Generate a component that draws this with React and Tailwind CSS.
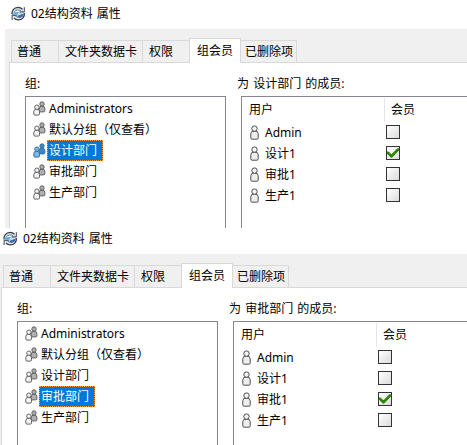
import React from "react";

const ROWS = ["Administrators", "默认分组（仅查看）", "设计部门", "审批部门", "生产部门"];
const USERS = ["Admin", "设计1", "审批1", "生产1"];

function SyncIcon() {
  return (
    <svg width="15" height="15" viewBox="0 0 15 15" className="shrink-0">
      <circle cx="7.2" cy="7.6" r="5.9" fill="#cfdae4" />
      <path d="M2.4 5.6 C4 3.2 8 2.6 10.8 4.6 L7.4 6.2 Z" fill="#f4f7f9" />
      <path d="M1.8 8.6 L2.4 6.4 L8.2 6 L6.4 8.4 Z" fill="#5eaee8" />
      <path d="M6.2 10 L12.8 7.4 L11.6 10.6 L8 12.2 Z" fill="#2c69bd" />
      <path d="M3.2 12 L4.8 10.2 L9.4 11.8 L7 13 Z" fill="#f0f4f7" />
      <path d="M1.1 8.4 C.4 5 3 1.3 7 1.3 C8.9 1.3 10.4 2 11.6 3.2" fill="none" stroke="#35424f" strokeWidth="1.3" />
      <path d="M13.4 7 C13.9 10.6 11.2 13.9 7.4 13.9 C5.6 13.9 4 13.2 2.8 12" fill="none" stroke="#35424f" strokeWidth="1.3" />
      <path d="M3.2 5.9 C5 3.6 7.8 3.4 10 4.9 M11.4 9.6 C9.6 11.7 6.8 11.9 4.6 10.4" fill="none" stroke="#566675" strokeWidth="0.9" />
      <path d="M8.6 5.9 H13.3 V1.2 M5.8 9.3 H1.1 V14" fill="none" stroke="#35424f" strokeWidth="1" />
    </svg>
  );
}

function GroupIcon({ active }) {
  const stroke = active ? "#2a689d" : "#555555";
  const back = active ? "#4288bf" : "#b0b0b0";
  const front = active ? "#78b9ea" : "#f3f3f3";
  return (
    <svg width="13" height="15" viewBox="0 0 13 15" className="shrink-0" stroke={stroke} strokeWidth="0.9">
      <path d="M6.2 10 V7.4 Q6.2 5.2 9 5.2 Q11.9 5.2 11.9 7.6 V9.6 Q11.9 10.9 10.6 10.9 H7.2 Z" fill={back} />
      <circle cx="9" cy="3" r="2.2" fill={back} />
      <path d="M.8 12.9 V10.6 Q.8 8.1 3.6 8.1 Q6.5 8.1 6.5 10.6 V12.9 Q6.5 14.1 5.3 14.1 H2 Q.8 14.1 .8 12.9 Z" fill={front} />
      <circle cx="3.9" cy="6.2" r="2.2" fill={front} />
    </svg>
  );
}

function UserIcon() {
  return (
    <svg width="9" height="15" viewBox="0 0 9 15" className="-mt-px shrink-0" stroke="#4c4c4c" strokeWidth="1">
      <path d="M.8 12.8 V8.7 Q.8 5.9 4.5 5.9 Q8.2 5.9 8.2 8.7 V12.8 Q8.2 14.2 6.9 14.2 H2.1 Q.8 14.2 .8 12.8 Z" fill="#eeeeee" />
      <circle cx="4.5" cy="3.6" r="2.7" fill="#f4f4f4" />
    </svg>
  );
}

function Check({ checked }) {
  return (
    <span className="mt-[3px] flex h-[14px] w-[14px] shrink-0 self-start border border-[#333] bg-linear-to-br from-white to-[#dcdcdc]">
      {checked && (
        <svg width="12" height="12" viewBox="0 0 12 12">
          <path d="M0 4.4 L1.4 4.4 L4.5 7.3 L10.4 1.2 L12 1.2 L12 3.6 L4.9 10.8 L4.1 10.8 L0 6.8 Z" fill="#2c8500" />
        </svg>
      )}
    </span>
  );
}

function Tab({ label, className }) {
  return (
    <div className={"flex h-[22px] shrink-0 items-center border-t border-r border-[#d9d9d9] bg-[#f0f0f0] " + className}>
      {label}
    </div>
  );
}

function PropertiesWindow({ group, member, className }) {
  return (
    <section className={"w-[480px] shrink-0 overflow-hidden " + className}>
      <header className="flex h-[29px] items-center pb-[2px] pl-[6px]">
        <SyncIcon />
        <span className="ml-[5px]">02结构资料 <span className="ml-px">属性</span></span>
      </header>
      <div className="bg-[#f0f0f0] pt-[9px] pl-[4px]">
        <div className="flex h-[24px] items-end pl-[2px]">
          <Tab label="普通" className="w-[48px] border-l pl-[5px]" />
          <Tab label="文件夹数据卡" className="w-[84px] pl-[6px]" />
          <Tab label="权限" className="w-[46px] border-r-0 pl-[6px]" />
          <div className="z-10 -mb-px flex h-[25px] w-[52px] shrink-0 items-center self-start border-x border-t border-[#d9d9d9] bg-white pb-px pl-[7px]">组会员</div>
          <Tab label="已删除项" className="w-[56px] pl-[4px]" />
        </div>
        <div className="h-[180px] border-t border-l border-[#d9d9d9] bg-white pt-[12px] pl-[15px]">
          <div className="flex h-[21px] items-start leading-[18px]">
            <span className="w-[212px]">组:</span>
            <span className="[word-spacing:1px]">为 {group} 的成员:</span>
          </div>
          <div className="flex gap-[15px]">
            <div className="h-[150px] w-[201px] shrink-0 border border-[#828790] pt-px pl-[7px]">
              {ROWS.map((row) => (
                <div key={row} className="flex h-[21px] items-center">
                  <GroupIcon active={row === group && group === "设计部门"} />
                  <span className={"ml-px flex h-[21px] items-center border border-dotted pl-px " + (row === group ? "w-[56px] border-[#ff9b40] bg-[#0078d7] text-white" : "border-transparent")}>
                    {row}
                  </span>
                </div>
              ))}
            </div>
            <div className="h-[150px] w-[260px] shrink-0 border border-[#828790]">
              <div className="flex h-[25px] pl-[7px]">
                <span className="mt-px h-[24px] w-[136px] border-r border-[#e5e5e5] leading-[23px]">用户</span>
                <span className="pl-[6px] leading-[25px]">会员</span>
              </div>
              {USERS.map((user) => (
                <div key={user} className="flex h-[21px] items-center pl-[8px]">
                  <UserIcon />
                  <span className="w-[127px] pl-[6px]">{user}</span>
                  <Check checked={user === member} />
                </div>
              ))}
            </div>
          </div>
        </div>
      </div>
    </section>
  );
}

export default function App() {
  return (
    <main className="flex h-[445px] w-[467px] flex-col overflow-hidden bg-white font-['Noto_Sans','Noto_Sans_CJK_SC',sans-serif] text-[12px] leading-[18px] whitespace-nowrap text-black">
      <PropertiesWindow group="设计部门" member="设计1" className="ml-[5px] h-[228px]" />
      <PropertiesWindow group="审批部门" member="审批1" className="-mt-[3px] -ml-[3px] h-[220px]" />
    </main>
  );
}
